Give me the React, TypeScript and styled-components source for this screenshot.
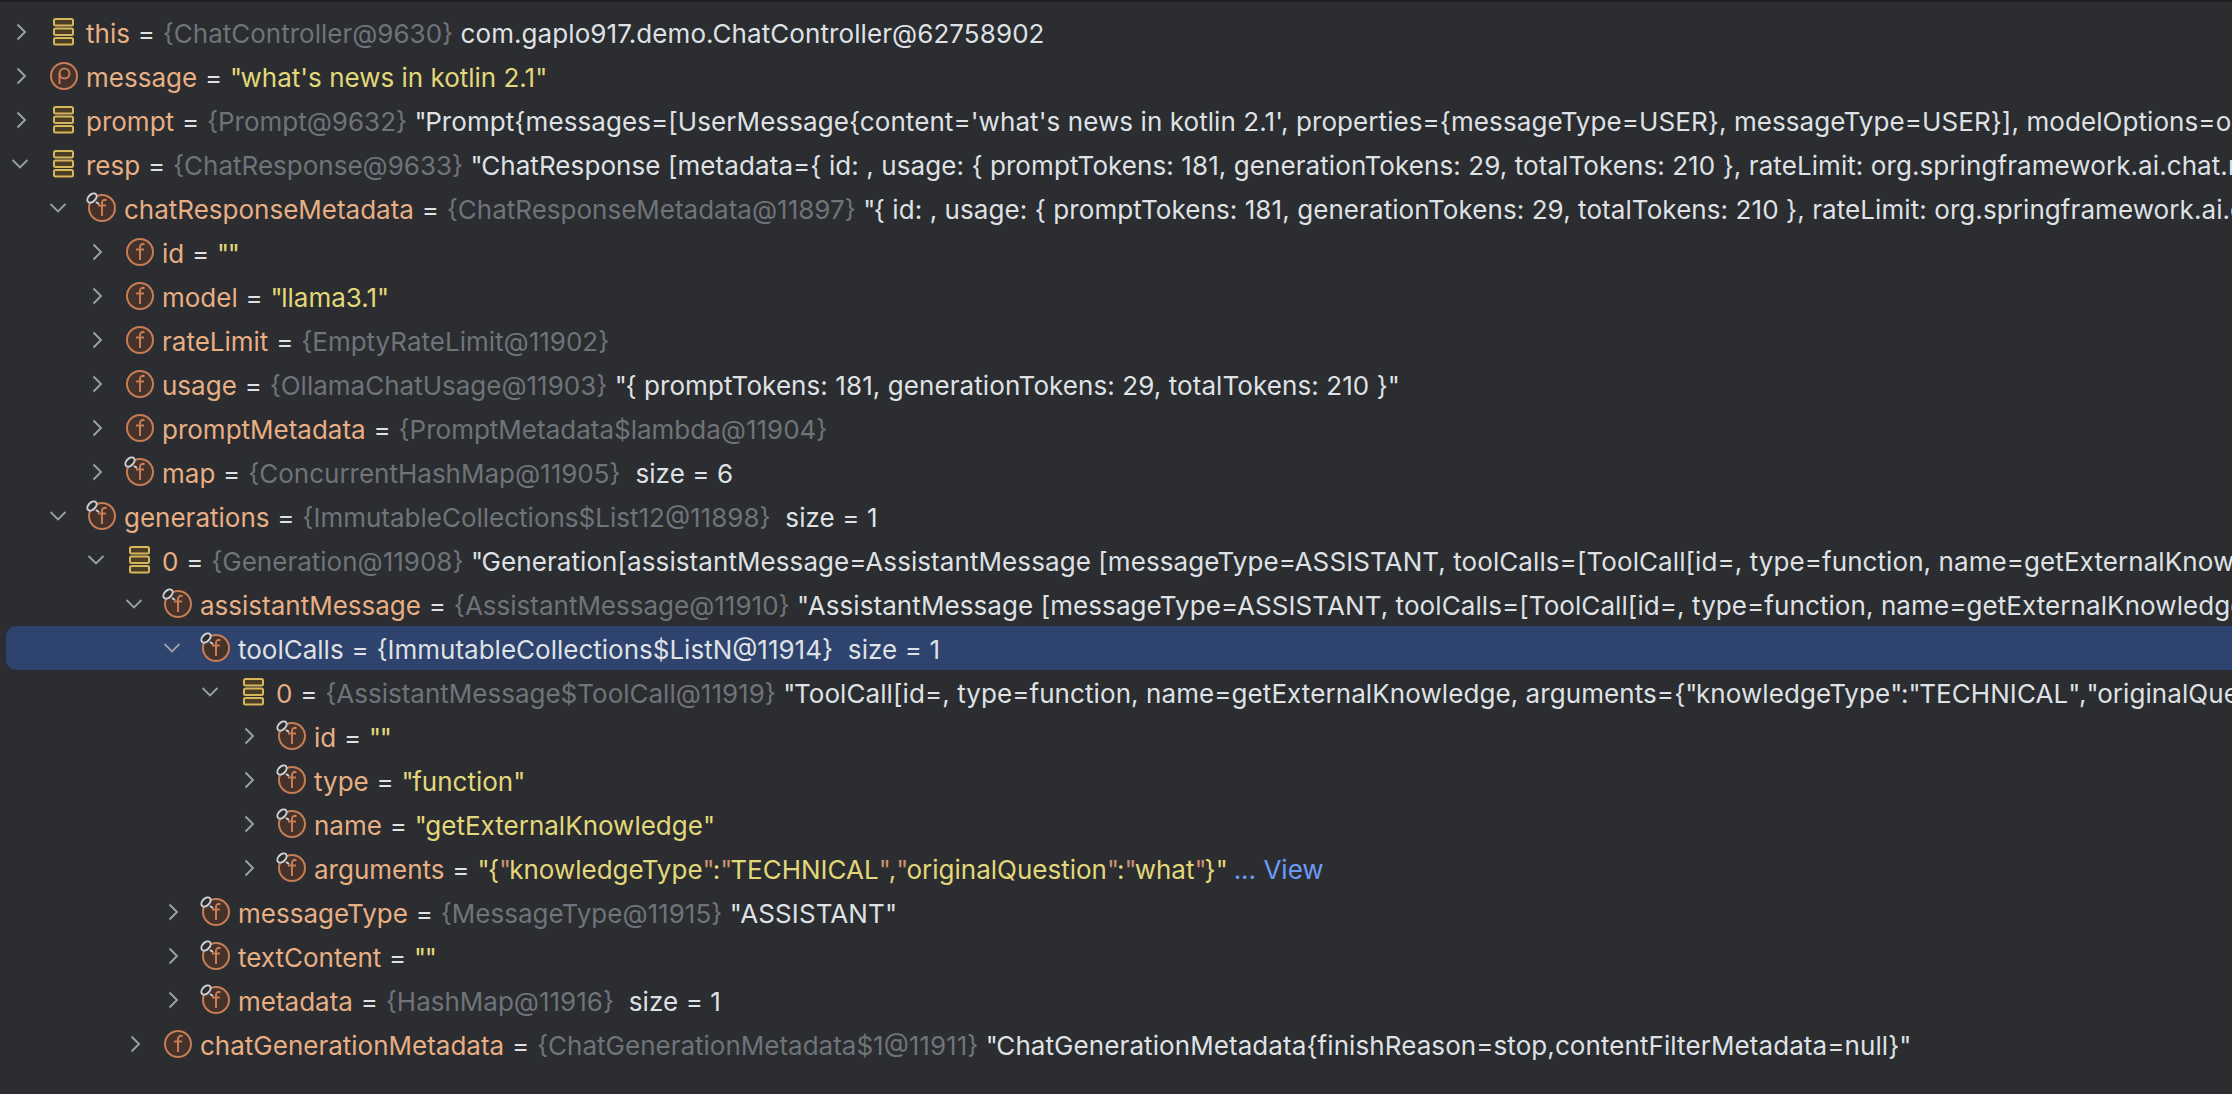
import React from "react";
import styled, { createGlobalStyle } from "styled-components";

const Global = createGlobalStyle`
  html, body { margin: 0; padding: 0; background: #2b2d30; }
  body { width: 2232px; height: 1094px; overflow: hidden; }
`;

const Panel = styled.div`
  width: 2232px;
  height: 1094px;
  box-sizing: border-box;
  background: #2b2d30;
  border-top: 2px solid #1e1f22;
  padding-top: 8px;
  overflow: hidden;
  font-family: Inter, "Noto Sans", sans-serif;
  font-size: 26px;
  color: #dfe1e5;
`;

const Row = styled.div<{ $depth: number; $selected?: boolean }>`
  height: 44px;
  display: flex;
  align-items: center;
  white-space: nowrap;
  margin-left: 6px;
  padding-left: ${(p) => p.$depth * 38}px;
  border-radius: ${(p) => (p.$selected ? "10px 0 0 10px" : "0")};
  background: ${(p) => (p.$selected ? "#2e436e" : "transparent")};
`;

const Toggle = styled.svg`
  width: 16px;
  height: 20px;
  margin-left: 6px;
  flex: none;
  color: #9da0a8;
`;

const IconSlot = styled.span`
  position: relative;
  width: 32px;
  height: 32px;
  margin-left: 20px;
  margin-right: 6px;
  flex: none;
  display: block;
`;

const IconArt = styled.svg`
  position: absolute;
  left: 0;
  top: 0;
  overflow: visible;
`;

const Label = styled.div`
  display: flex;
  align-items: center;
  padding-top: 2px;
  white-space: pre;
`;

const Name = styled.span<{ $selected?: boolean }>`
  color: ${(p) => (p.$selected ? "#dfe1e5" : "#e8ae84")};
`;
const Eq = styled.span`
  color: #dfe1e5;
  white-space: pre;
  padding: 0 0.5px;
`;
const Type = styled.span<{ $selected?: boolean }>`
  color: ${(p) => (p.$selected ? "#dfe1e5" : "#6f737a")};
`;
const Str = styled.span`
  color: #e3d879;
  white-space: pre;
`;
const Plain = styled.span`
  color: #dfe1e5;
  white-space: pre;
  letter-spacing: 0.08px;
`;
const Link = styled.span`
  color: #6b9bf5;
  white-space: pre;
`;
const Quote = styled.span<{ $escaped?: boolean }>`
  letter-spacing: ${(p) => (p.$escaped ? "-2px" : "-1.5px")};
  color: ${(p) => (p.$escaped ? "#cf8e6d" : "inherit")};
`;

type IconKind = "stack" | "p" | "f" | "fr";

const Chevron = ({ open }: { open: boolean }) => (
  <Toggle viewBox="0 0 16 20" fill="none" stroke="currentColor" strokeWidth="1.9">
    {open ? <path d="M0.5 6 L8 13.5 L15.5 6" /> : <path d="M5.5 2.5 L13 10 L5.5 17.5" />}
  </Toggle>
);

const Letter = ({ ch }: { ch: string }) =>
  ch === "p" ? (
    <g fill="none" stroke="#c77d55" strokeWidth="2">
      <circle cx="16.5" cy="13.5" r="5" />
      <path d="M11.5 13 V24" />
    </g>
  ) : (
    <path d="M20.5 8.5 C18.5 7.2 16 8 16 11 V24 M12 13.5 H20" fill="none" stroke="#c77d55" strokeWidth="2" />
  );

const Icon = ({ kind }: { kind: IconKind }) => (
  <IconSlot>
    <IconArt width="32" height="32" viewBox="0 0 32 32">
      {kind === "stack" ? (
        <g fill="#4a3d26" stroke="#d8b65c" strokeWidth="2">
          <rect x="6" y="3" width="19" height="6.5" rx="1.5" />
          <rect x="6" y="12.5" width="19" height="6.5" rx="1.5" />
          <rect x="6" y="22" width="19" height="6.5" rx="1.5" />
        </g>
      ) : (
        <>
          <circle cx="16" cy="16" r="13" fill="#45322b" stroke="#c77d55" strokeWidth="2" />
          <Letter ch={kind === "p" ? "p" : "f"} />
          {kind === "fr" && (
            <g fill="none" stroke="#ced0d6" strokeWidth="2">
              <ellipse cx="6" cy="6" rx="5.5" ry="3.5" transform="rotate(-45 6 6)" fill="#2b2d30" />
              <path d="M10 10 L13 12" />
            </g>
          )}
        </>
      )}
    </IconArt>
  </IconSlot>
);

// Inter's straight quote is wider here than in the IDE, so quotes get their own tighter span.
const quoted = (text: string, escapeInner = false) => {
  const parts = text.split('"');
  const last = parts.length - 2;
  const out: React.ReactNode[] = [];
  parts.forEach((part, i) => {
    out.push(part);
    if (i < parts.length - 1) {
      out.push(
        <Quote key={i} $escaped={escapeInner && i > 0 && i < last}>
          "
        </Quote>
      );
    }
  });
  return out;
};

type Item = {
  depth: number;
  open: boolean;
  icon: IconKind;
  name: string;
  type?: string;
  str?: string;
  escaped?: boolean;
  text?: string;
  link?: string;
  selected?: boolean;
};

const items: Item[] = [
  { depth: 0, open: false, icon: "stack", name: "this", type: "{ChatController@9630}", text: " com.gaplo917.demo.ChatController@62758902" },
  { depth: 0, open: false, icon: "p", name: "message", str: "\"what's news in kotlin 2.1\"" },
  { depth: 0, open: false, icon: "stack", name: "prompt", type: "{Prompt@9632}", text: " \"Prompt{messages=[UserMessage{content='what's news in kotlin 2.1', properties={messageType=USER}, messageType=USER}], modelOptions=org.springframework.ai.chat.prompt" },
  { depth: 0, open: true, icon: "stack", name: "resp", type: "{ChatResponse@9633}", text: " \"ChatResponse [metadata={ id: , usage: { promptTokens: 181, generationTokens: 29, totalTokens: 210 }, rateLimit: org.springframework.ai.chat.metadata" },
  { depth: 1, open: true, icon: "fr", name: "chatResponseMetadata", type: "{ChatResponseMetadata@11897}", text: " \"{ id: , usage: { promptTokens: 181, generationTokens: 29, totalTokens: 210 }, rateLimit: org.springframework.ai.chat.metadata" },
  { depth: 2, open: false, icon: "f", name: "id", str: '""' },
  { depth: 2, open: false, icon: "f", name: "model", str: '"llama3.1"' },
  { depth: 2, open: false, icon: "f", name: "rateLimit", type: "{EmptyRateLimit@11902}" },
  { depth: 2, open: false, icon: "f", name: "usage", type: "{OllamaChatUsage@11903}", text: ' "{ promptTokens: 181, generationTokens: 29, totalTokens: 210 }"' },
  { depth: 2, open: false, icon: "f", name: "promptMetadata", type: "{PromptMetadata$lambda@11904}" },
  { depth: 2, open: false, icon: "fr", name: "map", type: "{ConcurrentHashMap@11905}", text: "  size = 6" },
  { depth: 1, open: true, icon: "fr", name: "generations", type: "{ImmutableCollections$List12@11898}", text: "  size = 1" },
  { depth: 2, open: true, icon: "stack", name: "0", type: "{Generation@11908}", text: ' "Generation[assistantMessage=AssistantMessage [messageType=ASSISTANT, toolCalls=[ToolCall[id=, type=function, name=getExternalKnowledge, arguments' },
  { depth: 3, open: true, icon: "fr", name: "assistantMessage", type: "{AssistantMessage@11910}", text: ' "AssistantMessage [messageType=ASSISTANT, toolCalls=[ToolCall[id=, type=function, name=getExternalKnowledge, arguments' },
  { depth: 4, open: true, icon: "fr", name: "toolCalls", type: "{ImmutableCollections$ListN@11914}", text: "  size = 1", selected: true },
  { depth: 5, open: true, icon: "stack", name: "0", type: "{AssistantMessage$ToolCall@11919}", text: ' "ToolCall[id=, type=function, name=getExternalKnowledge, arguments={"knowledgeType":"TECHNICAL","originalQuestion":"what"}' },
  { depth: 6, open: false, icon: "fr", name: "id", str: '""' },
  { depth: 6, open: false, icon: "fr", name: "type", str: '"function"' },
  { depth: 6, open: false, icon: "fr", name: "name", str: '"getExternalKnowledge"' },
  { depth: 6, open: false, icon: "fr", name: "arguments", str: '"{"knowledgeType":"TECHNICAL","originalQuestion":"what"}"', escaped: true, link: " ... View" },
  { depth: 4, open: false, icon: "fr", name: "messageType", type: "{MessageType@11915}", text: ' "ASSISTANT"' },
  { depth: 4, open: false, icon: "fr", name: "textContent", str: '""' },
  { depth: 4, open: false, icon: "fr", name: "metadata", type: "{HashMap@11916}", text: "  size = 1" },
  { depth: 3, open: false, icon: "f", name: "chatGenerationMetadata", type: "{ChatGenerationMetadata$1@11911}", text: ' "ChatGenerationMetadata{finishReason=stop,contentFilterMetadata=null}"' },
];

export default function App() {
  return (
    <>
      <Global />
      <Panel>
        {items.map((it, i) => (
          <Row key={i} $depth={it.depth} $selected={it.selected}>
            <Chevron open={it.open} />
            <Icon kind={it.icon} />
            <Label>
              <Name $selected={it.selected}>{it.name}</Name>
              <Eq> = </Eq>
              {it.str && <Str>{quoted(it.str, it.escaped)}</Str>}
              {it.type && <Type $selected={it.selected}>{it.type}</Type>}
              {it.text && <Plain>{quoted(it.text)}</Plain>}
              {it.link && <Link>{it.link}</Link>}
            </Label>
          </Row>
        ))}
      </Panel>
    </>
  );
}
